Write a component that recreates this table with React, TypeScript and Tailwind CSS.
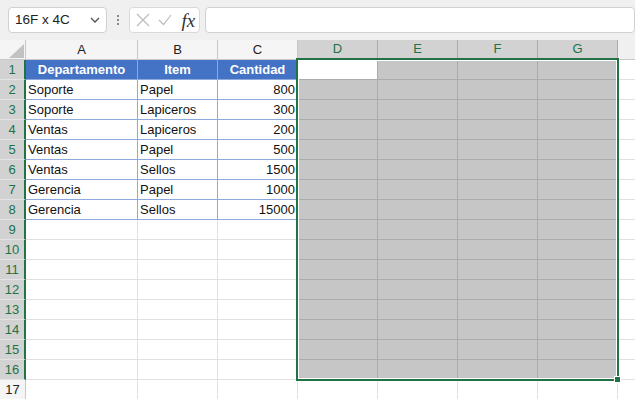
import React from 'react'

const COLS = [
  { key: 'A', w: 'w-[112px]' },
  { key: 'B', w: 'w-[80px]' },
  { key: 'C', w: 'w-[80px]' },
  { key: 'D', w: 'w-[80px]' },
  { key: 'E', w: 'w-[80px]' },
  { key: 'F', w: 'w-[80px]' },
  { key: 'G', w: 'w-[80px]' },
]

const TABLE: [string, string, string][] = [
  ['Departamento', 'Item', 'Cantidad'],
  ['Soporte', 'Papel', '800'],
  ['Soporte', 'Lapiceros', '300'],
  ['Ventas', 'Lapiceros', '200'],
  ['Ventas', 'Papel', '500'],
  ['Ventas', 'Sellos', '1500'],
  ['Gerencia', 'Papel', '1000'],
  ['Gerencia', 'Sellos', '15000'],
]

const ROWS = Array.from({ length: 17 }, (_, i) => i + 1)

function Chevron() {
  return (
    <svg width="10" height="6" viewBox="0 0 10 6" fill="none">
      <path d="M1 1 L5 5 L9 1" stroke="#505050" strokeWidth="1.3" />
    </svg>
  )
}

function Toolbar() {
  return (
    <div className="h-[40px] bg-[#f0f0f0] flex items-start pt-[7px] pl-[8px]">
      {/* name box */}
      <div className="w-[101px] h-[26px] bg-white border border-[#d1d1d1] rounded-[4px] flex items-center justify-between pl-[6px] pr-[6px] text-[13.5px] text-[#222]">
        <span>16F x 4C</span>
        <Chevron />
      </div>
      <div className="w-[22px] h-[26px] flex flex-col items-center justify-center gap-[2px]">
        <span className="w-[2px] h-[2px] bg-[#8a8a8a]" />
        <span className="w-[2px] h-[2px] bg-[#8a8a8a]" />
        <span className="w-[2px] h-[2px] bg-[#8a8a8a]" />
      </div>
      {/* cancel / enter / insert function */}
      <div className="w-[73px] h-[26px] bg-white border border-[#d9d9d9] rounded-[4px] flex items-center pl-[6px]">
        <svg width="14" height="14" viewBox="0 0 14 14" fill="none">
          <path d="M1 1 L13 13 M13 1 L1 13" stroke="#bcbcbc" strokeWidth="1.2" />
        </svg>
        <svg className="ml-[8px]" width="14" height="12" viewBox="0 0 14 12" fill="none">
          <path d="M1 6 L5.5 10.5 L13 1" stroke="#bcbcbc" strokeWidth="1.2" />
        </svg>
        <span className="ml-[10px] font-['Liberation_Serif',serif] italic text-[19px] leading-none text-[#333]">fx</span>
      </div>
      <div className="ml-[5px] w-[440px] h-[26px] bg-white border border-[#d1d1d1] rounded-[4px]" />
    </div>
  )
}

function HeaderRow() {
  return (
    <div className="flex h-[20px]">
      <div className="w-[26px] shrink-0 bg-[#f5f5f5] border-r border-b border-[#c8c8c8] flex items-end justify-end pr-[1px] pb-[1px]">
        <svg width="15" height="14" viewBox="0 0 15 14">
          <path d="M15 0 L15 14 L0 14 Z" fill="#c2c2c2" />
        </svg>
      </div>
      {COLS.map((c, i) =>
        i >= 3 ? (
          <div
            key={c.key}
            className={`${c.w} shrink-0 bg-[#d2d2d2] text-[#217346] border-r border-r-[#ababab] border-b-2 border-b-[#217346] flex items-center justify-center`}
          >
            {c.key}
          </div>
        ) : (
          <div
            key={c.key}
            className={`${c.w} shrink-0 bg-[#f5f5f5] text-[#222] border-r border-b border-[#c8c8c8] flex items-center justify-center`}
          >
            {c.key}
          </div>
        )
      )}
      <div className="flex-1 bg-[#f0f0f0] border-b border-[#c8c8c8]" />
    </div>
  )
}

function Cell({ r, c }: { r: number; c: number }) {
  const w = COLS[c].w
  if (r <= 8 && c <= 2) {
    const text = TABLE[r - 1][c]
    if (r === 1) {
      return (
        <div className={`${w} shrink-0 bg-[#4472c4] text-white font-bold border-r border-b border-[#8ea9db] flex items-center justify-center`}>
          {text}
        </div>
      )
    }
    return (
      <div
        className={`${w} shrink-0 bg-white border-r border-b border-[#8ea9db] flex items-center px-[2px] ${c === 2 ? 'justify-end' : 'justify-start'}`}
      >
        {text}
      </div>
    )
  }
  if (r <= 16 && c >= 3) {
    if (r === 1 && c === 3) {
      return <div className={`${w} shrink-0 bg-white border-r border-b border-[#ababab]`} />
    }
    return <div className={`${w} shrink-0 bg-[#c6c6c6] border-r border-b border-[#ababab]`} />
  }
  return <div className={`${w} shrink-0 bg-white border-r border-b border-[#e1e1e1]`} />
}

function Row({ r }: { r: number }) {
  const selected = r <= 16
  return (
    <div className="flex h-[20px]">
      {selected ? (
        <div className="w-[26px] shrink-0 bg-[#d2d2d2] text-[#217346] border-r-2 border-r-[#217346] border-b border-b-[#e4e4e4] flex items-center justify-center">
          {r}
        </div>
      ) : (
        <div className="w-[26px] shrink-0 bg-[#f5f5f5] text-[#222] border-r border-b border-[#c8c8c8] flex items-center justify-center">
          {r}
        </div>
      )}
      {COLS.map((_, c) => (
        <Cell key={c} r={r} c={c} />
      ))}
      <div className="flex-1 bg-white border-b border-[#e1e1e1]" />
    </div>
  )
}

export default function App() {
  return (
    <div className="w-[635px] h-[399px] overflow-hidden bg-white font-['Liberation_Sans',Arial,sans-serif] text-[13px] text-[#111]">
      <Toolbar />
      <div className="relative">
        <HeaderRow />
        {ROWS.map((r) => (
          <Row key={r} r={r} />
        ))}
        {/* selection D1:G16 */}
        <div className="absolute left-[296px] top-[18px] w-[323px] h-[323px] border-2 border-[#217346] pointer-events-none">
          <div className="w-full h-full border border-white" />
        </div>
        <div className="absolute left-[614px] top-[336px] w-[7px] h-[7px] bg-[#217346] border border-white" />
      </div>
    </div>
  )
}
